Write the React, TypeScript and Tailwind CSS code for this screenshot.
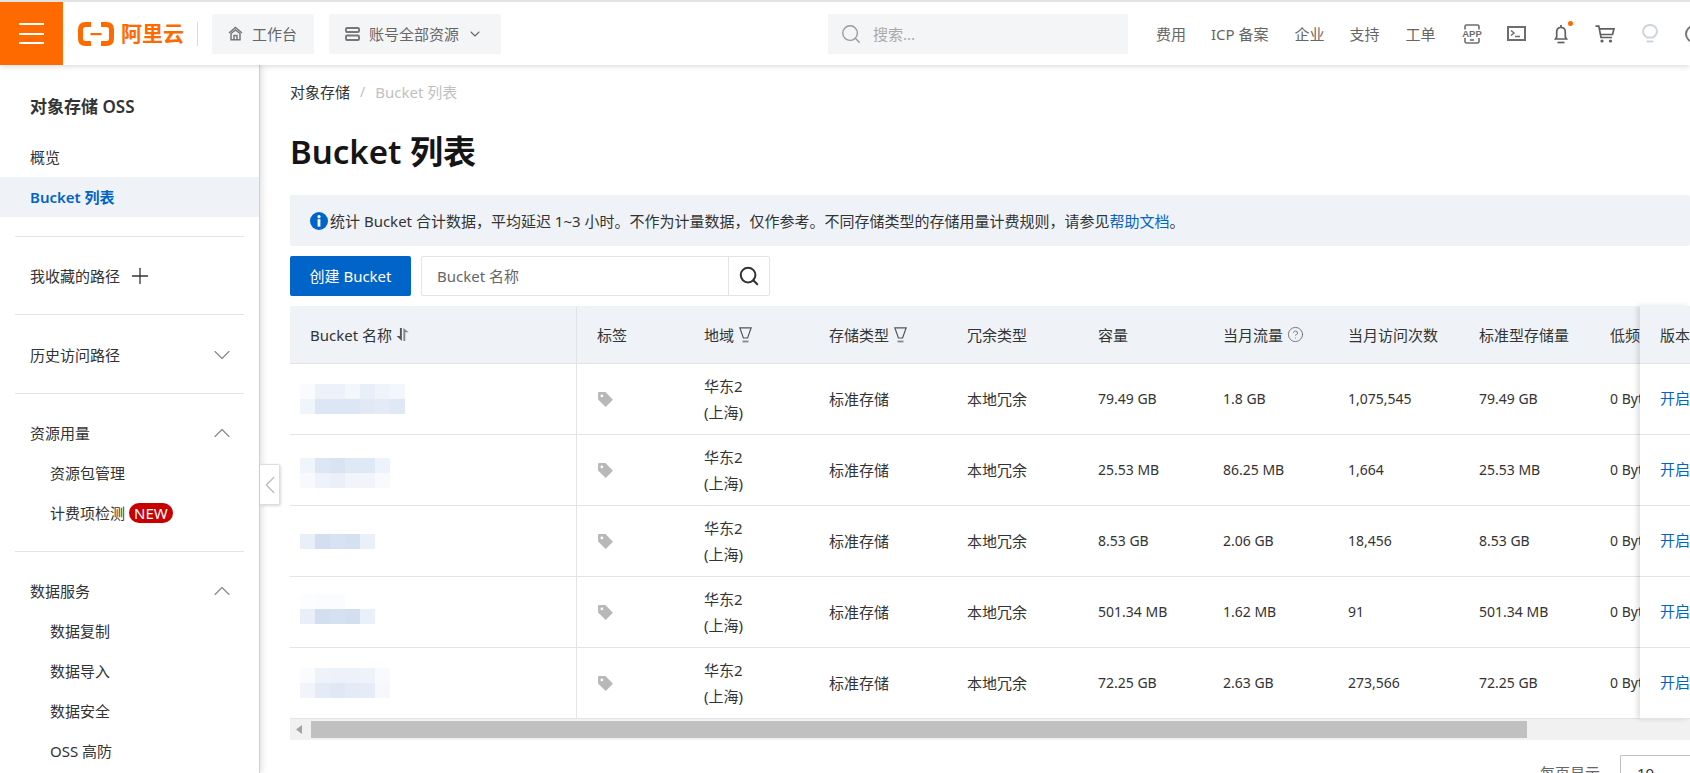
import type { ReactNode } from "react"
import { ChevronDown, ChevronLeft, ChevronUp, CircleHelp, Plus, Search } from "lucide-react"

interface BucketRow {
  blur: string[][]
  nudge?: string
  size: string
  traffic: string
  visits: string
  standard: string
}

const rows: BucketRow[] = [
  {
    blur: [
      ["bg-[#fafbfe]", "bg-[#edf2fa]", "bg-[#edf2fa]", "bg-[#f3f6fb]", "bg-[#e9eff8]", "bg-[#eff3fa]", "bg-[#f3f6fb]"],
      ["bg-[#f0f4fb]", "bg-[#dde6f4]", "bg-[#dde6f4]", "bg-[#dde6f4]", "bg-[#e2e9f5]", "bg-[#e4ebf6]", "bg-[#dfe8f5]"],
    ],
    size: "79.49 GB",
    traffic: "1.8 GB",
    visits: "1,075,545",
    standard: "79.49 GB",
  },
  {
    blur: [
      ["bg-[#f0f4fb]", "bg-[#dde6f4]", "bg-[#d9e3f3]", "bg-[#dfe8f5]", "bg-[#dfe8f5]", "bg-[#eef2fa]"],
      ["bg-[#f8f9fd]", "bg-[#eef2fa]", "bg-[#eaeff8]", "bg-[#f1f4fb]", "bg-[#f1f4fb]", "bg-[#f8fafd]"],
    ],
    nudge: "mt-[6px]",
    size: "25.53 MB",
    traffic: "86.25 MB",
    visits: "1,664",
    standard: "25.53 MB",
  },
  {
    blur: [["bg-[#e9eff8]", "bg-[#d3dff0]", "bg-[#d8e2f2]", "bg-[#d5e0f1]", "bg-[#eaf0f9]"]],
    size: "8.53 GB",
    traffic: "2.06 GB",
    visits: "18,456",
    standard: "8.53 GB",
  },
  {
    blur: [
      ["bg-[#fcfdfe]", "bg-[#fbfcfe]", "bg-[#fbfcfe]", "bg-white", "bg-white"],
      ["bg-[#e9eff8]", "bg-[#d3dff0]", "bg-[#d5e0f1]", "bg-[#d3dff0]", "bg-[#eaf0f9]"],
    ],
    nudge: "mb-[6px]",
    size: "501.34 MB",
    traffic: "1.62 MB",
    visits: "91",
    standard: "501.34 MB",
  },
  {
    blur: [
      ["bg-[#f9fbfd]", "bg-[#eef3fa]", "bg-[#edf2fa]", "bg-[#edf2fa]", "bg-[#eef3fa]", "bg-[#f8fafd]"],
      ["bg-[#f1f4fb]", "bg-[#e4ebf6]", "bg-[#e1e8f5]", "bg-[#e4ebf6]", "bg-[#e6ecf7]", "bg-[#f6f8fc]"],
    ],
    size: "72.25 GB",
    traffic: "2.63 GB",
    visits: "273,566",
    standard: "72.25 GB",
  },
]

const gridCols = "grid-cols-[287px_107px_125px_138px_131px_125px_125px_131px_131px_131px]"

function Logo() {
  return (
    <div className="ml-[15px] flex shrink-0 items-center gap-[7px] text-[#ff6a00]">
      <svg width="36" height="24" viewBox="0 0 36 24" fill="none">
        <path d="M13 2.5H7.5Q2.5 2.5 2.5 7.5V16.5Q2.5 21.5 7.5 21.5H13" stroke="#ff6a00" strokeWidth="5" />
        <path d="M23 2.5H28.5Q33.5 2.5 33.5 7.5V16.5Q33.5 21.5 28.5 21.5H23" stroke="#ff6a00" strokeWidth="5" />
        <rect x="12.5" y="11" width="11" height="2.2" fill="#ff6a00" />
      </svg>
      <span className="text-[21px] leading-none font-bold">阿里云</span>
    </div>
  )
}

function HomeIcon() {
  return (
    <svg width="15" height="15" viewBox="0 0 15 15" fill="none" stroke="#777" strokeWidth="1.5">
      <path d="M1 7L7.5 1.5L14 7" />
      <path d="M3 7.5L7.5 4L12 7.5V13.8H3Z" />
      <path d="M6 13.8V9.5H9V13.8" />
    </svg>
  )
}

function StackIcon() {
  return (
    <svg width="15" height="14" viewBox="0 0 15 14" fill="none" stroke="#777" strokeWidth="1.9">
      <rect x="1" y="1" width="13" height="4" rx="1" />
      <rect x="1" y="8.5" width="13" height="4.5" rx="1" />
    </svg>
  )
}

function AppIcon() {
  return (
    <svg width="20" height="20" viewBox="0 0 20 20" fill="none">
      <path d="M3 5.5V2.5Q3 1 4.5 1H15.5Q17 1 17 2.5V5.5M3 14V17.5Q3 19 4.5 19H15.5Q17 19 17 17.5V14" stroke="#6e6e6e" strokeWidth="1.6" />
      <rect x="8" y="15.2" width="4" height="1.6" fill="#6e6e6e" />
      <text x="10" y="13" textAnchor="middle" fontSize="9.5" fontWeight="700" fill="#6e6e6e" fontFamily="Liberation Sans, sans-serif">
        APP
      </text>
    </svg>
  )
}

function TerminalIcon() {
  return (
    <svg width="19" height="15" viewBox="0 0 19 15" fill="none" stroke="#6e6e6e">
      <rect x="1" y="1" width="17" height="13" strokeWidth="2" />
      <path d="M4 4.5L7 7L4 9.5" strokeWidth="1.5" />
      <path d="M8 10.5H13" strokeWidth="1.5" />
    </svg>
  )
}

function BellIcon() {
  return (
    <svg width="16" height="20" viewBox="0 0 16 20" fill="none" stroke="#5f5f5f" strokeWidth="1.7">
      <path d="M8 1V3" />
      <path d="M2.5 15L3.7 13V8Q3.7 3.5 8 3.5Q12.3 3.5 12.3 8V13L13.5 15Z" />
      <path d="M4.5 18.5H11.5" />
    </svg>
  )
}

function CartIcon() {
  return (
    <svg width="20" height="18" viewBox="0 0 20 18" fill="none">
      <path d="M0.5 1.2H3.8L6 12.5H17" stroke="#5f5f5f" strokeWidth="1.7" />
      <path d="M4.5 3.8H19L17.5 9.5H5.5" stroke="#5f5f5f" strokeWidth="1.7" />
      <circle cx="7" cy="16" r="1.6" fill="#5f5f5f" />
      <circle cx="15.5" cy="16" r="1.6" fill="#5f5f5f" />
    </svg>
  )
}

function BulbIcon() {
  return (
    <svg width="16" height="19" viewBox="0 0 16 19" fill="none" stroke="#cfd5dc" strokeWidth="2">
      <path d="M5 13.5Q1 10.8 1 7.5A7 6.6 0 0 1 15 7.5Q15 10.8 11 13.5Z" />
      <path d="M4.5 17.5H11.5" />
    </svg>
  )
}

function FilterIcon() {
  return (
    <svg width="13" height="16" viewBox="0 0 13 16" fill="none" stroke="#555" className="ml-[5px] shrink-0">
      <path d="M0.8 0.8H12.2L8.6 11H4.4Z" strokeWidth="1.2" />
      <path d="M3.5 14.5H9.5" strokeWidth="1.8" stroke="#888" />
    </svg>
  )
}

function SortIcon() {
  return (
    <svg width="13" height="15" viewBox="0 0 12 14" fill="#555" className="ml-[4px] shrink-0">
      <path d="M3.6 1H5.4V13L0.5 8.5H3.6Z" />
      <path d="M6.8 13H8.6V5H11.8L6.8 1Z" fill="#888" />
    </svg>
  )
}

function TagIcon() {
  return (
    <svg width="17" height="17" viewBox="0 0 16 16" fill="#b8b8b8">
      <path d="M1 1.8Q1 1 1.8 1H8L15 8.2L8.2 15L1 8Z" />
      <circle cx="4.6" cy="4.6" r="1.3" fill="#fff" />
    </svg>
  )
}

function InfoIcon() {
  return (
    <svg width="18" height="18" viewBox="0 0 18 18" className="shrink-0">
      <circle cx="9" cy="9" r="9" fill="#0064c8" />
      <rect x="7.6" y="7.2" width="2.8" height="7.4" fill="#fff" />
      <circle cx="9" cy="4.7" r="1.6" fill="#fff" />
    </svg>
  )
}

function TopBar() {
  return (
    <header className="relative z-20 flex h-[63px] shrink-0 items-center bg-white whitespace-nowrap shadow-[0_1px_6px_rgba(0,0,0,0.16)]">
      <div className="flex h-full w-[63px] shrink-0 flex-col items-center justify-center gap-[7.5px] bg-[#ff6a00]">
        <span className="h-[2px] w-[25px] bg-white" />
        <span className="h-[2px] w-[25px] bg-white" />
        <span className="h-[2px] w-[25px] bg-white" />
      </div>
      <Logo />
      <div className="ml-[13px] h-[24px] w-px shrink-0 bg-[#d9d9d9]" />
      <div className="ml-[14px] flex h-[40px] w-[102px] shrink-0 items-center gap-[9px] rounded-[2px] bg-[#f4f5f7] pl-[16px] text-[#666]">
        <HomeIcon />
        <span>工作台</span>
      </div>
      <div className="ml-[15px] flex h-[40px] w-[172px] shrink-0 items-center rounded-[2px] bg-[#f4f5f7] pl-[16px] text-[#666]">
        <StackIcon />
        <span className="ml-[9px]">账号全部资源</span>
        <ChevronDown size={16} strokeWidth={1.6} className="ml-[8px] text-[#666]" />
      </div>
      <div className="ml-[327px] flex h-[40px] w-[300px] shrink-0 items-center bg-[#f4f5f7] pl-[12px] text-[#aaa]">
        <Search size={22} strokeWidth={1.5} className="text-[#999]" />
        <span className="ml-[11px]">搜索...</span>
      </div>
      <nav className="ml-[28px] flex shrink-0 items-center text-[#666]">
        <span>费用</span>
        <span className="ml-[25px]">ICP 备案</span>
        <span className="ml-[26px]">企业</span>
        <span className="ml-[25px]">支持</span>
        <span className="ml-[26px]">工单</span>
      </nav>
      <div className="ml-[26px] flex shrink-0 items-center">
        <AppIcon />
        <span className="ml-[25px] flex">
          <TerminalIcon />
        </span>
        <span className="relative ml-[27px] flex">
          <BellIcon />
          <span className="absolute top-[-3px] right-[-4px] size-[5px] rounded-full bg-[#ff6a00]" />
        </span>
        <span className="ml-[26px] flex">
          <CartIcon />
        </span>
        <span className="ml-[27px] flex">
          <BulbIcon />
        </span>
        <span className="ml-[27px] size-[18px] shrink-0 rounded-full border-[2px] border-[#777]" />
      </div>
    </header>
  )
}

function Divider() {
  return <div className="mx-[15px] mt-[18px] mb-[19.25px] h-px bg-[#e3e4e6]" />
}

function SideItem({ children, indent, active }: { children: ReactNode; indent?: boolean; active?: boolean }) {
  return (
    <div
      className={
        active
          ? "flex h-[40px] items-center bg-[#eff3f8] pl-[30px] font-semibold text-[#0064c8]"
          : indent
            ? "flex h-[40px] items-center pl-[50px] text-[#333]"
            : "flex h-[40px] items-center pl-[30px] text-[#333]"
      }
    >
      {children}
    </div>
  )
}

function SideGroup({ title, open }: { title: string; open: boolean }) {
  const Chevron = open ? ChevronUp : ChevronDown
  return (
    <div className="flex h-[40px] items-center justify-between pr-[23px] pl-[30px] text-[#333]">
      <span>{title}</span>
      <Chevron size={28} strokeWidth={1} className="text-[#888]" />
    </div>
  )
}

function Sidebar() {
  return (
    <aside className="relative z-10 w-[260px] shrink-0 overflow-hidden border-r border-[#d0d0d0] bg-white pt-[22px] shadow-[2px_0_6px_rgba(0,0,0,0.12)]">
      <div className="mb-[10px] flex h-[40px] items-center pl-[30px] text-[17px] font-semibold text-[#333]">对象存储 OSS</div>
      <SideItem>概览</SideItem>
      <SideItem active>Bucket 列表</SideItem>
      <div className="mt-[19px]" />
      <Divider />
      <div className="flex h-[40px] items-center pl-[30px] text-[#333]">
        <span>我收藏的路径</span>
        <Plus size={26} strokeWidth={1.2} className="ml-[7px]" />
      </div>
      <Divider />
      <SideGroup title="历史访问路径" open={false} />
      <Divider />
      <SideGroup title="资源用量" open />
      <SideItem indent>资源包管理</SideItem>
      <SideItem indent>
        <span>计费项检测</span>
        <span className="ml-[4px] flex h-[20px] items-center rounded-full bg-[#c80000] px-[5px] text-white">NEW</span>
      </SideItem>
      <Divider />
      <SideGroup title="数据服务" open />
      <SideItem indent>数据复制</SideItem>
      <SideItem indent>数据导入</SideItem>
      <SideItem indent>数据安全</SideItem>
      <SideItem indent>OSS 高防</SideItem>
    </aside>
  )
}

function BlurredName({ blur, nudge }: { blur: string[][]; nudge?: string }) {
  return (
    <div className={`flex flex-col ${nudge ?? ""}`}>
      {blur.map((line, i) => (
        <div key={i} className="flex">
          {line.map((c, j) => (
            <span key={j} className={`h-[15px] w-[15px] ${c}`} />
          ))}
        </div>
      ))}
    </div>
  )
}

function HeadCell({ children, first }: { children: ReactNode; first?: boolean }) {
  return (
    <div className={first ? "flex items-center border-r border-[#e3e4e6] pl-[20px]" : "flex items-center pl-[20px] whitespace-nowrap"}>
      {children}
    </div>
  )
}

function BucketTable() {
  return (
    <div className="mt-[10px] flex">
      <div className="w-[1350px] shrink-0 overflow-hidden">
        <div className={`grid h-[58px] w-[1431px] border-b border-[#e3e4e6] bg-[#eff3f8] text-[#333] ${gridCols}`}>
          <HeadCell first>
            Bucket 名称
            <SortIcon />
          </HeadCell>
          <HeadCell>标签</HeadCell>
          <HeadCell>
            地域
            <FilterIcon />
          </HeadCell>
          <HeadCell>
            存储类型
            <FilterIcon />
          </HeadCell>
          <HeadCell>冗余类型</HeadCell>
          <HeadCell>容量</HeadCell>
          <HeadCell>
            当月流量
            <CircleHelp size={17} strokeWidth={1.2} className="ml-[4px] text-[#666]" />
          </HeadCell>
          <HeadCell>当月访问次数</HeadCell>
          <HeadCell>标准型存储量</HeadCell>
          <HeadCell>低频存储量</HeadCell>
        </div>
        {rows.map((row) => (
          <div key={row.visits} className={`grid h-[71px] w-[1431px] border-b border-[#e3e4e6] text-[#333] ${gridCols}`}>
            <div className="flex items-center border-r border-[#e3e4e6] pl-[10px]">
              <BlurredName blur={row.blur} nudge={row.nudge} />
            </div>
            <div className="flex items-center pl-[20px]">
              <TagIcon />
            </div>
            <div className="flex flex-col justify-center pl-[20px] leading-[26px]">
              <span>华东2</span>
              <span>(上海)</span>
            </div>
            <div className="flex items-center pl-[20px]">标准存储</div>
            <div className="flex items-center pl-[20px]">本地冗余</div>
            <div className="flex items-center pl-[20px] text-[14px]">{row.size}</div>
            <div className="flex items-center pl-[20px] text-[14px]">{row.traffic}</div>
            <div className="flex items-center pl-[20px] text-[14px]">{row.visits}</div>
            <div className="flex items-center pl-[20px] text-[14px]">{row.standard}</div>
            <div className="flex items-center pl-[20px] text-[14px] whitespace-nowrap">0 Byte</div>
          </div>
        ))}
      </div>
      <div className="relative flex w-[50px] shrink-0 flex-col bg-white shadow-[-3px_0_5px_rgba(0,0,0,0.12)]">
        <div className="flex h-[58px] items-center border-b border-[#e3e4e6] bg-[#eff3f8] pl-[20px] whitespace-nowrap text-[#333]">版本</div>
        {rows.map((row) => (
          <div key={row.visits} className="flex h-[71px] items-center border-b border-[#e3e4e6] pb-[2px] pl-[20px] whitespace-nowrap text-[#0064c8]">
            开启
          </div>
        ))}
      </div>
    </div>
  )
}

function ScrollBar() {
  return (
    <div className="flex h-[21px] items-center bg-[#f1f1f1]">
      <svg width="6" height="9" viewBox="0 0 6 9" fill="#a3a3a3" className="ml-[6px] shrink-0">
        <path d="M6 0V9L0 4.5Z" />
      </svg>
      <div className="ml-[9px] h-[17px] w-[1216px] bg-[#c0c0c0]" />
    </div>
  )
}

export default function App() {
  return (
    <div
      className="flex h-screen w-full flex-col overflow-hidden border-t-2 border-[#e3e3e3] bg-white text-[15px] leading-[20px]"
      style={{ fontFamily: '"Noto Sans", "Noto Sans CJK SC", sans-serif' }}
    >
      <TopBar />
      <div className="relative flex min-h-0 flex-1">
        <Sidebar />
        <main className="min-w-0 flex-1 overflow-hidden pl-[30px]">
          <div className="mt-[17px] flex h-[20px] items-center text-[14px] text-[#333]">
            <span className="text-[15px]">对象存储</span>
            <span className="mx-[10px] text-[#c1c1c1]">/</span>
            <span className="text-[15px] text-[#c1c1c1]">Bucket 列表</span>
          </div>
          <h1 className="mt-[28px] flex h-[44px] items-center text-[33px] font-semibold text-[#151515]">Bucket 列表</h1>
          <div className="mt-[21px] flex h-[51px] items-center gap-[2px] rounded-[2px] bg-[#eff3f8] pl-[20px] text-[#333]">
            <InfoIcon />
            <p>
              统计 Bucket 合计数据，平均延迟 1~3 小时。不作为计量数据，仅作参考。不同存储类型的存储用量计费规则，请参见
              <span className="text-[#0064c8]">帮助文档</span>。
            </p>
          </div>
          <div className="mt-[10px] flex h-[40px]">
            <button type="button" className="w-[121px] rounded-[2px] bg-[#0064c8] text-white">
              创建 Bucket
            </button>
            <div className="ml-[10px] flex w-[349px] rounded-[2px] border border-[#e3e4e6]">
              <div className="flex flex-1 items-center pl-[15px] text-[#666]">Bucket 名称</div>
              <div className="flex w-[41px] items-center justify-center border-l border-[#e3e4e6]">
                <Search size={22} strokeWidth={2.2} className="text-[#333]" />
              </div>
            </div>
          </div>
          <BucketTable />
          <ScrollBar />
          <div className="mt-[15px] flex items-start justify-end text-[#666]">
            <span className="mt-[8px] mr-[20px]">每页显示</span>
            <div className="flex h-[36px] w-[70px] items-center rounded-l-[2px] border border-r-0 border-[#c1c1c1] pl-[16px] text-[#333]">10</div>
          </div>
        </main>
        <div className="absolute top-[399px] left-[260px] z-20 flex h-[41px] w-[20px] items-center justify-center rounded-r-[2px] border border-l-0 border-[#ddd] bg-white shadow-[1px_1px_3px_rgba(0,0,0,0.15)]">
          <ChevronLeft size={30} strokeWidth={1} className="shrink-0 text-[#bbb]" />
        </div>
      </div>
    </div>
  )
}
